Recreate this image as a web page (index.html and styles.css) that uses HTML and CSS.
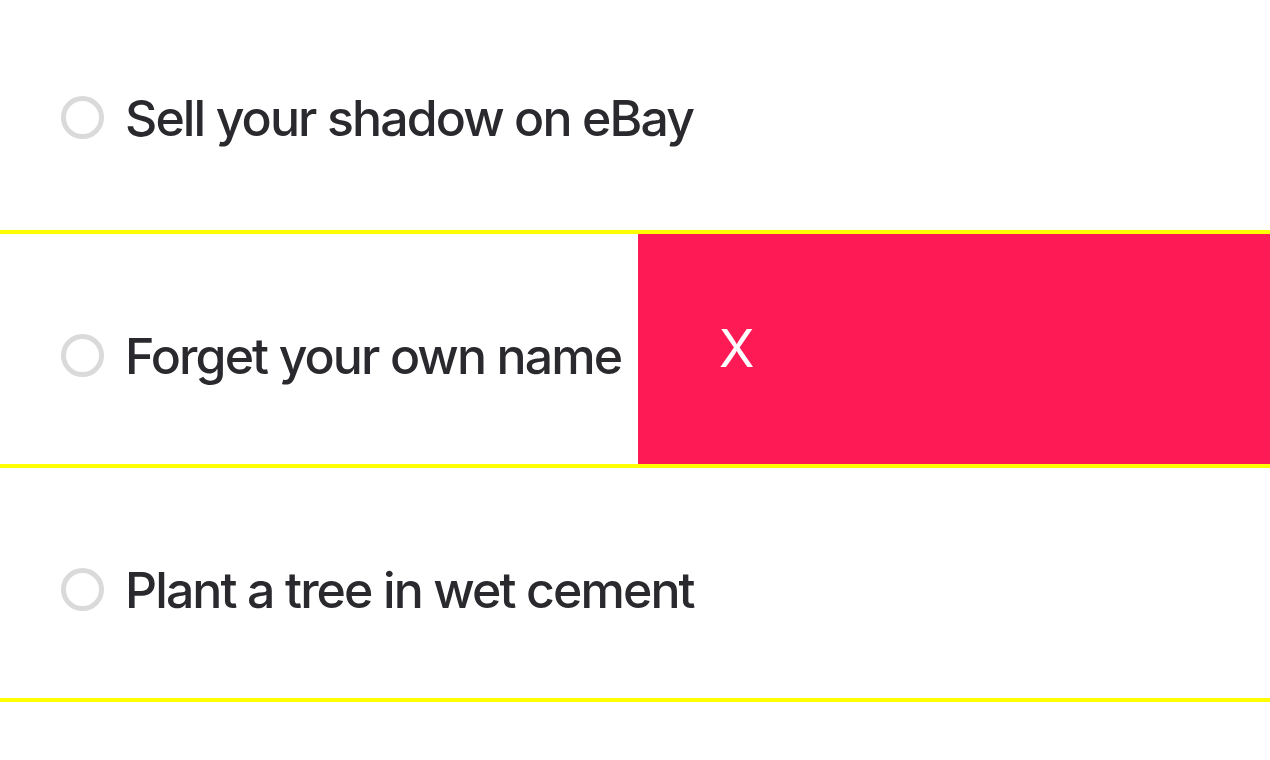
FILE: index.html
```html
<!DOCTYPE html>
<html lang="en">
<head>
<meta charset="utf-8">
<title>Todo</title>
<link rel="stylesheet" href="styles.css">
</head>
<body>
<ul class="list">
  <li class="item">
    <span class="check"></span>
    <span class="label">Sell your shadow on eBay</span>
  </li>
  <li class="item">
    <span class="check"></span>
    <span class="label">Forget your own name</span>
    <div class="delete">X</div>
  </li>
  <li class="item">
    <span class="check"></span>
    <span class="label">Plant a tree in wet cement</span>
  </li>
</ul>
</body>
</html>
```
FILE: styles.css
```css
html, body {
  margin: 0;
  padding: 0;
  background: #ffffff;
}
body {
  font-family: Inter, "Noto Sans", sans-serif;
  color: #2a2a2e;
  width: 1270px;
  height: 760px;
  overflow: hidden;
}
.list {
  list-style: none;
  margin: 0;
  padding: 0;
}
.item {
  position: relative;
  display: flex;
  align-items: center;
  height: 225px;
  padding-top: 5px;
  border-bottom: 4px solid #ffff00;
  padding-left: 61px;
}
.item + .item {
  height: 217px;
  padding-top: 13px;
}
.check {
  width: 33px;
  height: 33px;
  border: 5px solid #dadada;
  border-radius: 50%;
  flex: none;
}
.label {
  margin-left: 21px;
  font-size: 50px;
  font-weight: 500;
  letter-spacing: -1.9px;
  line-height: 1;
}
.delete {
  position: absolute;
  left: 638px;
  right: 0;
  top: 0;
  bottom: 0;
  background: #fe1a54;
  color: #ffffff;
  font-size: 52px;
  display: flex;
  align-items: center;
  padding-left: 81px;
  padding-bottom: 2px;
  box-sizing: border-box;
}
```
